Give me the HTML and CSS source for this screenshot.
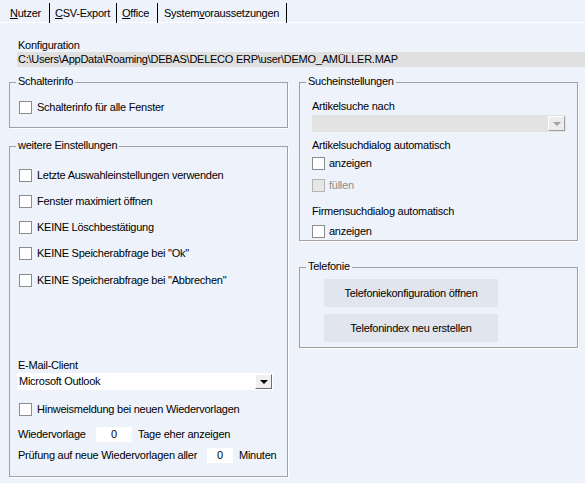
FILE: index.html
```html
<!DOCTYPE html>
<html lang="de">
<head>
<meta charset="utf-8">
<title>Nutzer</title>
<link rel="stylesheet" href="styles.css">
</head>
<body>
<div class="tabs">
  <div class="tab tab-1 active"><u>N</u>utzer</div>
  <div class="tab tab-2"><u>C</u>SV-Export</div>
  <div class="tab tab-3"><u>O</u>ffice</div>
  <div class="tab tab-4">System<u>v</u>oraussetzungen</div>
</div>
<div class="page">
  <div class="config-label">Konfiguration</div>
  <div class="config-path">C:\Users\AppData\Roaming\DEBAS\DELECO ERP\user\DEMO_AMÜLLER.MAP</div>
  <div class="columns">
    <div class="col">
      <div class="group g-schalter">
        <span class="legend">Schalterinfo</span>
        <div class="row"><span class="cb"></span><span>Schalterinfo für alle Fenster</span></div>
      </div>
      <div class="group g-weitere">
        <span class="legend">weitere Einstellungen</span>
        <div class="rows">
          <div class="row"><span class="cb"></span><span>Letzte Auswahleinstellungen verwenden</span></div>
          <div class="row"><span class="cb"></span><span>Fenster maximiert öffnen</span></div>
          <div class="row"><span class="cb"></span><span>KEINE Löschbestätigung</span></div>
          <div class="row"><span class="cb"></span><span>KEINE Speicherabfrage bei "Ok"</span></div>
          <div class="row"><span class="cb"></span><span>KEINE Speicherabfrage bei "Abbrechen"</span></div>
        </div>
        <div class="bottom">
          <div class="mail-label">E-Mail-Client</div>
          <div class="combo mail-combo"><span class="combo-text">Microsoft Outlook</span><span class="combo-btn"><span class="arrow"></span></span></div>
          <div class="row hinweis"><span class="cb"></span><span>Hinweismeldung bei neuen Wiedervorlagen</span></div>
          <div class="num-row wv"><span class="num-label wv-label">Wiedervorlage</span><span class="num wv-num">0</span><span>Tage eher anzeigen</span></div>
          <div class="num-row pr"><span class="num-label pr-label">Prüfung auf neue Wiedervorlagen aller</span><span class="num pr-num">0</span><span>Minuten</span></div>
        </div>
      </div>
    </div>
    <div class="col">
      <div class="group g-suche">
        <span class="legend">Sucheinstellungen</span>
        <div class="s-label first">Artikelsuche nach</div>
        <div class="combo disabled-combo"><span class="combo-text"></span><span class="combo-btn"><span class="arrow"></span></span></div>
        <div class="s-label second">Artikelsuchdialog automatisch</div>
        <div class="row r-anz1"><span class="cb"></span><span>anzeigen</span></div>
        <div class="row r-fuell disabled"><span class="cb"></span><span>füllen</span></div>
        <div class="s-label third">Firmensuchdialog automatisch</div>
        <div class="row r-anz2"><span class="cb"></span><span>anzeigen</span></div>
      </div>
      <div class="group g-tel">
        <span class="legend">Telefonie</span>
        <div class="btn">Telefoniekonfiguration öffnen</div>
        <div class="btn btn-2">Telefonindex neu erstellen</div>
      </div>
    </div>
  </div>
</div>
</body>
</html>
```
FILE: styles.css
```css
html, body {
  margin: 0;
  padding: 0;
  background: #eef3fb;
  width: 585px;
  height: 483px;
  overflow: hidden;
}
body {
  font-family: "Liberation Sans", Arial, sans-serif;
  font-size: 11px;
  line-height: 13px;
  letter-spacing: -0.25px;
  color: #000;
}
u { text-decoration: underline; text-underline-offset: 1px; }

.tabs {
  display: flex;
  height: 22px;
  border-bottom: 1px solid #ffffff;
  box-sizing: content-box;
}
.tab {
  box-sizing: border-box;
  height: 20px;
  margin-top: 3px;
  padding-top: 4px;
  border-right: 1px solid #000;
  white-space: nowrap;
}
.tab-1 { width: 50px; padding-left: 10px; }
.tab-2 { width: 67px; padding-left: 5px; }
.tab-3 { width: 41px; padding-left: 5px; }
.tab-4 { width: 129px; padding-left: 6px; }

.page { padding-top: 16px; }
.config-label { margin-left: 18px; height: 13px; }
.config-path {
  margin-left: 17px;
  height: 15px;
  line-height: 15px;
  padding-left: 1px;
  background: #e0e0e0;
  white-space: nowrap;
}

.columns {
  display: grid;
  grid-template-columns: 279px 279px;
  column-gap: 11px;
  margin-left: 9px;
  margin-top: 15px;
}
.col { display: flex; flex-direction: column; }

.group {
  position: relative;
  box-sizing: border-box;
  border: 1px solid #a0a0a0;
  box-shadow: 1px 1px 0 #ffffff;
}
.legend {
  position: absolute;
  top: -8px;
  left: 6px;
  padding: 0 2px;
  background: #eef3fb;
  line-height: 13px;
}

.row {
  display: flex;
  align-items: center;
  height: 13px;
  gap: 5px;
  white-space: nowrap;
}
.cb {
  display: inline-block;
  box-sizing: border-box;
  width: 13px;
  height: 13px;
  border: 1px solid #8c8c8c;
  background: #ffffff;
  flex: none;
}
.disabled { color: #8d8d8d; }
.disabled .cb { background: #e6e6e6; border-color: #b5b5b5; }

.g-schalter { height: 46px; padding: 18px 0 0 9px; }
.g-weitere {
  height: 331px;
  margin-top: 18px;
  display: flex;
  flex-direction: column;
  padding: 22px 0 13px 0;
}
.rows { display: flex; flex-direction: column; gap: 13px; padding-left: 9px; }
.rows .row:last-child { margin-top: 1px; }
.bottom { margin-top: auto; display: flex; flex-direction: column; }
.mail-label { margin-left: 8px; height: 13px; }

.combo {
  display: flex;
  box-sizing: border-box;
  margin-top: 1px;
  height: 17px;
}
.combo-text { flex: 1; padding-left: 2px; line-height: 17px; white-space: nowrap; }
.combo-btn {
  width: 17px;
  box-sizing: border-box;
  display: flex;
  align-items: center;
  justify-content: center;
  border-top: 1px solid #ffffff;
  border-left: 1px solid #ffffff;
  border-right: 1px solid #6f6f6f;
  border-bottom: 1px solid #6f6f6f;
  background: #f0f0f0;
}
.arrow {
  width: 0;
  height: 0;
  border-left: 4px solid transparent;
  border-right: 4px solid transparent;
  border-top: 4px solid #000;
}
.mail-combo {
  margin-left: 7px;
  width: 256px;
  background: #ffffff;
}
.mail-combo .combo-btn { margin: 1px 1px 1px 0; height: 15px; }

.hinweis { margin-top: 13px; padding-left: 9px; }
.num-row {
  display: flex;
  align-items: center;
  height: 15px;
  white-space: nowrap;
  padding-left: 8px;
}
.wv { margin-top: 11px; }
.pr { margin-top: 6px; }
.num {
  box-sizing: border-box;
  height: 15px;
  line-height: 15px;
  background: #ffffff;
  text-align: center;
  margin-right: 6px;
}
.wv-label { width: 78px; }
.wv-num { width: 36px; }
.pr-label { width: 189px; }
.pr-num { width: 26px; }

.g-suche {
  height: 159px;
  padding: 17px 11px 0 12px;
}
.s-label { height: 13px; white-space: nowrap; }
.disabled-combo {
  margin-top: 2px;
  background: #e3e3e3;
}
.disabled-combo .combo-btn {
  border-color: #ffffff #9e9e9e #9e9e9e #ffffff;
  background: #ececec;
  margin: 1px 1px 1px 0;
  height: 15px;
}
.disabled-combo .arrow { border-top-color: #a0a0a0; }
.second { margin-top: 7px; }
.r-anz1 { margin-top: 5px; gap: 4px; }
.r-fuell { margin-top: 9px; gap: 4px; }
.third { margin-top: 13px; }
.r-anz2 { margin-top: 7px; gap: 4px; }

.g-tel {
  height: 81px;
  margin-top: 26px;
  padding: 11px 0 0 24px;
}
.btn {
  width: 174px;
  height: 28px;
  background: #e1e5ed;
  display: flex;
  align-items: center;
  justify-content: center;
  white-space: nowrap;
}
.btn-2 { margin-top: 7px; }
```
